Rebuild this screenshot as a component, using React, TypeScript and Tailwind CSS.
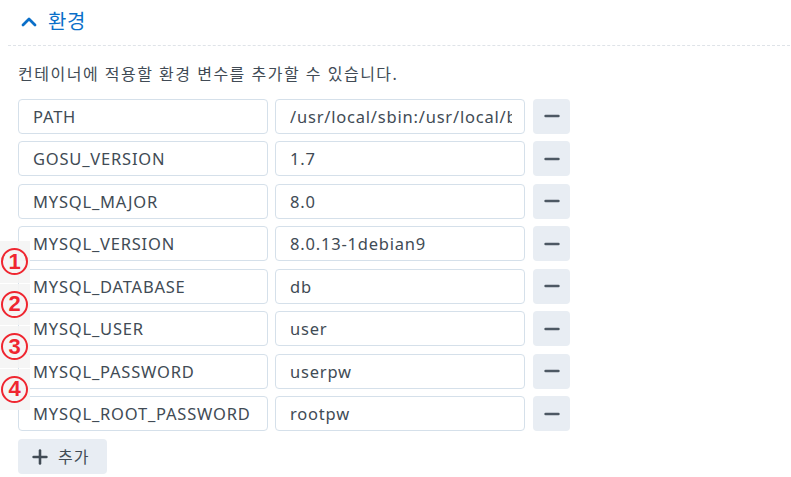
import React from 'react'
import { ChevronUp, Minus, Plus } from 'lucide-react'

const envRows = [
  { name: 'PATH', value: '/usr/local/sbin:/usr/local/bin:/usr/sbin:/usr/bin' },
  { name: 'GOSU_VERSION', value: '1.7' },
  { name: 'MYSQL_MAJOR', value: '8.0' },
  { name: 'MYSQL_VERSION', value: '8.0.13-1debian9' },
  { name: 'MYSQL_DATABASE', value: 'db' },
  { name: 'MYSQL_USER', value: 'user' },
  { name: 'MYSQL_PASSWORD', value: 'userpw' },
  { name: 'MYSQL_ROOT_PASSWORD', value: 'rootpw' }
]

const markers = ['1', '2', '3', '4']

const Field: React.FC<{ value: string }> = ({ value }) => (
  <div className="w-[250px] h-[35px] shrink-0 flex items-center border border-[#d5e0ea] rounded-[4px] bg-white pl-[14px] pr-[12px] pt-[0.6px] overflow-hidden whitespace-nowrap text-[16.5px] leading-[24px] tracking-[0.8px] text-[#414b55]">
    <span className="block w-full overflow-hidden">{value}</span>
  </div>
)

export default function App() {
  return (
    <div className="relative w-[791px] h-[477px] bg-white overflow-hidden font-['Noto_Sans','Noto_Sans_CJK_KR',sans-serif]">
      <div className="ml-[8px] mr-[1px] h-[46px] flex items-center gap-[7px] pl-[9px] pb-[2px] border-b border-dashed border-[#dfe3e8] text-[#0a6fc9]">
        <ChevronUp size={24} strokeWidth={2.8} />
        <span className="text-[20px] tracking-[0.5px]">환경</span>
      </div>

      <p className="ml-[18px] mt-[17px] text-[16px] leading-[22px] tracking-[1.5px] text-[#414b55]">
        컨테이너에 적용할 환경 변수를 추가할 수 있습니다.
      </p>

      <div className="ml-[18px] mt-[13.9px] flex flex-col gap-[7.5px]">
        {envRows.map(row => (
          <div key={row.name} className="flex gap-[7px]">
            <Field value={row.name} />
            <Field value={row.value} />
            <button className="ml-[1px] w-[37px] h-[35px] flex items-center justify-center rounded-[4px] bg-[#e8edf3] text-[#4d5863]">
              <Minus size={22} strokeWidth={2.8} />
            </button>
          </div>
        ))}
      </div>

      <button className="ml-[18px] mt-[8px] w-[89px] h-[35px] flex items-center gap-[7px] pl-[11px] rounded-[4px] bg-[#e8edf3] text-[#414b55] text-[16px] tracking-[1px]">
        <Plus size={22} strokeWidth={2.8} />
        <span>추가</span>
      </button>

      {/* annotation markers drawn over the screenshot */}
      <div className="absolute left-0 top-[241px] w-[30px] flex flex-col gap-[1px]">
        {markers.map(n => (
          <div key={n} className="h-[41.5px] bg-[#f4f4f4]/90 flex items-center">
            <div className="ml-[1px] w-[27px] h-[27px] rounded-full border-[2px] border-[#ef2630] flex items-center justify-center text-[#ef2630] text-[22px] leading-none font-bold font-['Liberation_Sans',sans-serif]">
              {n}
            </div>
          </div>
        ))}
      </div>
    </div>
  )
}
